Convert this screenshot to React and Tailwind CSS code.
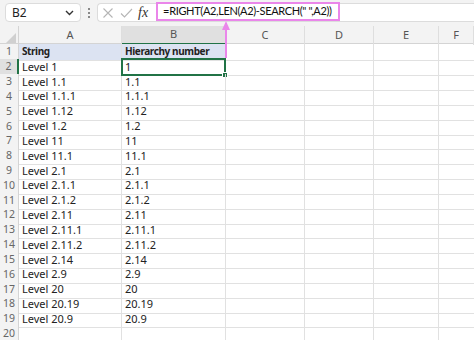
const rows = [
  ["String", "Hierarchy number"],
  ["Level 1", "1"],
  ["Level 1.1", "1.1"],
  ["Level 1.1.1", "1.1.1"],
  ["Level 1.12", "1.12"],
  ["Level 1.2", "1.2"],
  ["Level 11", "11"],
  ["Level 11.1", "11.1"],
  ["Level 2.1", "2.1"],
  ["Level 2.1.1", "2.1.1"],
  ["Level 2.1.2", "2.1.2"],
  ["Level 2.11", "2.11"],
  ["Level 2.11.1", "2.11.1"],
  ["Level 2.11.2", "2.11.2"],
  ["Level 2.14", "2.14"],
  ["Level 2.9", "2.9"],
  ["Level 20", "20"],
  ["Level 20.19", "20.19"],
  ["Level 20.9", "20.9"],
  ["", ""],
];

const cols = ["A", "B", "C", "D", "E", "F"];
const grid = "grid grid-cols-[19px_103px_104px_79px_69px_65px_1fr]";

function Toolbar() {
  return (
    <div className="h-[26px] bg-[#f3f3f3] flex items-start pt-[3px]">
      <div className="ml-[5px] w-[76px] h-[19px] bg-white rounded-[4px] border border-[#dcdcdc] flex items-center justify-between px-[6px]">
        <span className="text-[12px] text-[#222]">B2</span>
        <svg width="9" height="6" viewBox="0 0 9 6">
          <path d="M1 1l3.5 3.5L8 1" stroke="#333" strokeWidth="1.4" fill="none" />
        </svg>
      </div>
      <div className="w-[16px] h-[19px] flex flex-col items-center justify-center gap-[2px]">
        <span className="w-[2px] h-[2px] bg-[#666] rounded-full" />
        <span className="w-[2px] h-[2px] bg-[#666] rounded-full" />
        <span className="w-[2px] h-[2px] bg-[#666] rounded-full" />
      </div>
      <div className="flex-1 h-[19px] bg-white rounded-l-[4px] border border-r-0 border-[#dcdcdc] flex items-center">
        <svg className="ml-[4px]" width="12" height="12" viewBox="0 0 12 12">
          <path d="M1.5 1.5l9 9M10.5 1.5l-9 9" stroke="#b5b5b5" strokeWidth="1.1" />
        </svg>
        <svg className="ml-[6px]" width="13" height="12" viewBox="0 0 13 12">
          <path d="M1 6.5l3.5 3.5L12 2" stroke="#b5b5b5" strokeWidth="1.1" fill="none" />
        </svg>
        <span className="ml-[5px] text-[14px] italic text-[#333] font-['Liberation_Serif',serif]">fx</span>
        <div className="ml-[8px] -mt-[2px] h-[19px] pl-[5px] pr-[6px] border-2 border-[#ea86ea] flex items-center">
          <span className="text-[11px] tracking-[-0.35px] text-[#111] font-['Lato',sans-serif]">=RIGHT(A2,LEN(A2)-SEARCH(" ",A2))</span>
        </div>
      </div>
    </div>
  );
}

function Header() {
  return (
    <div className={grid + " h-[18px] bg-[#f3f3f3] border-b border-[#d4d4d4]"}>
      <div className="relative border-r border-[#d4d4d4]">
        <svg className="absolute right-[2px] bottom-[2px]" width="10" height="10" viewBox="0 0 10 10">
          <path d="M10 0v10H0z" fill="#d0d0d0" />
        </svg>
      </div>
      {cols.map((c) => (
        <div
          key={c}
          className={
            "flex items-center justify-center text-[11px] text-[#555] border-r border-[#dedede] " +
            (c === "B" ? "bg-[#e0e0e0] border-b-2 border-b-[#217346]" : "")
          }
        >
          {c}
        </div>
      ))}
    </div>
  );
}

function Row({ n, a, b }) {
  const head = n === 1;
  const sel = n === 2;
  const txt = head ? "bg-[#dce3f2] font-bold text-[10px] tracking-[-0.4px]" : "";
  return (
    <div className={grid + " h-[14.83px] text-[11px] text-[#222]"}>
      <div
        className={
          "flex items-center justify-center text-[10.5px] text-[#666] border-b border-[#e6e6e6] " +
          (sel ? "bg-[#e0e0e0] border-r-2 border-r-[#217346]" : "bg-[#f3f3f3] border-r border-r-[#d4d4d4]")
        }
      >
        {n}
      </div>
      <div className={"flex items-center pl-[3px] border-r border-b border-[#e1e1e1] " + txt}>{a}</div>
      <div className={"relative flex items-center pl-[3px] border-r border-b border-[#e1e1e1] " + txt}>
        {b}
        {sel && (
          <>
            <span className="absolute -left-[1px] -top-[1px] -right-[1px] -bottom-[1px] border-2 border-[#217346]" />
            <span className="absolute -right-[3px] -bottom-[3px] w-[4px] h-[4px] bg-[#217346] border border-white box-content" />
          </>
        )}
      </div>
      <div className="border-r border-b border-[#e1e1e1]" />
      <div className="border-r border-b border-[#e1e1e1]" />
      <div className="border-r border-b border-[#e1e1e1]" />
      <div className="border-b border-[#e1e1e1]" />
    </div>
  );
}

export default function App() {
  return (
    <div className="relative w-[474px] h-[340px] overflow-hidden bg-white font-['Noto_Sans',sans-serif]">
      <Toolbar />
      <Header />
      {rows.map(([a, b], i) => (
        <Row key={i} n={i + 1} a={a} b={b} />
      ))}
      <svg className="absolute left-[221px] top-[20px]" width="10" height="38" viewBox="0 0 10 38">
        <path d="M5 3v35" stroke="#ea86ea" strokeWidth="2" />
        <path d="M5 1L1 10h8z" fill="#ea86ea" />
      </svg>
    </div>
  );
}
